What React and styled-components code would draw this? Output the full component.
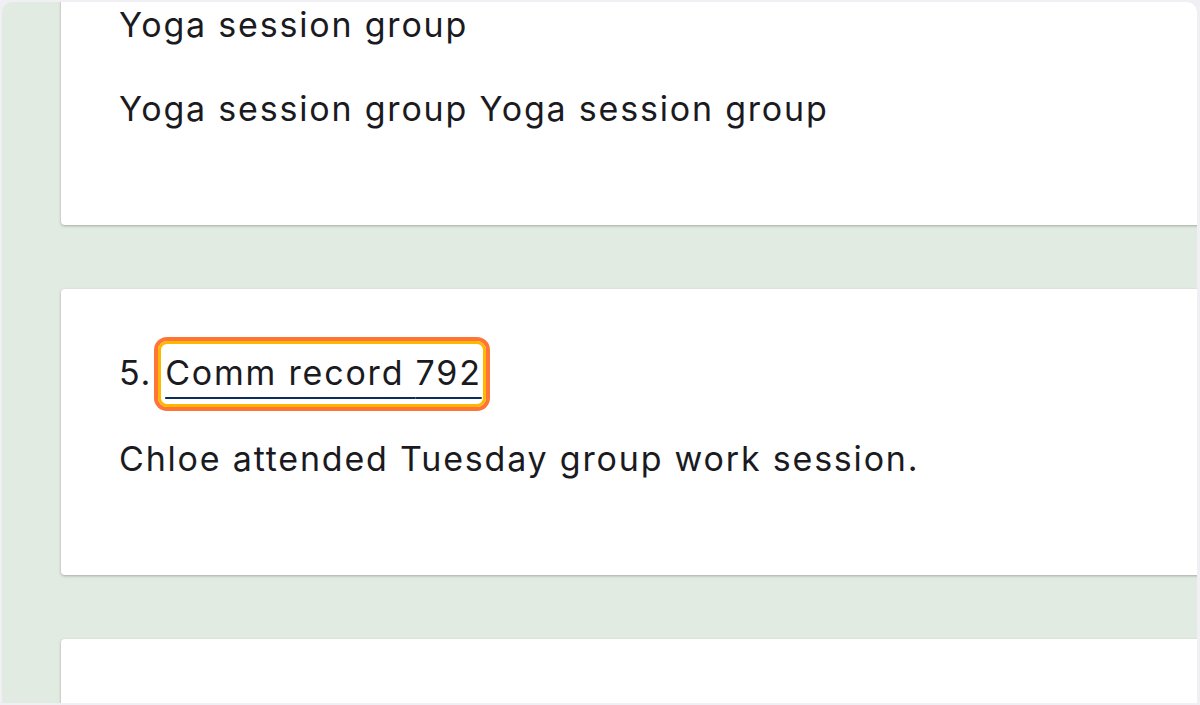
import styled, { createGlobalStyle } from 'styled-components'

const GlobalStyle = createGlobalStyle`
  html, body {
    margin: 0;
    padding: 0;
    background: #efeff4;
  }
  body {
    font-family: Inter, 'Noto Sans', sans-serif;
    color: #1b1b1f;
  }
`

const Frame = styled.div`
  width: 1200px;
  height: 705px;
  padding: 2px 3px 2px 2px;
  box-sizing: border-box;
  background: #efeff4;
`

const Viewport = styled.main`
  height: 100%;
  overflow: hidden;
  background: #e2ebe1;
  border-radius: 10px 10px 0 0;
`

const Feed = styled.div`
  display: flex;
  flex-direction: column;
  gap: 64px;
  margin-top: ${({ $scroll }) => -$scroll}px;
  padding-left: 59px;
  width: 1400px;
`

const Card = styled.article`
  background: #fff;
  border-radius: 4px;
  box-shadow: 0 1px 3px rgba(0, 0, 0, 0.28);
  padding: 60px 58px 92px;
  display: flex;
  flex-direction: column;
  gap: 38px;
`

const Heading = styled.h3`
  margin: 0;
  font-size: 34px;
  font-weight: 400;
  letter-spacing: 1.8px;
  line-height: 48px;
  display: flex;
  gap: 13px;
`

const RecordLink = styled.a`
  position: relative;
  color: #1b1b1f;
  text-decoration: underline;
  text-decoration-color: #0b2d5b;
  text-decoration-thickness: 2px;
  text-decoration-skip-ink: none;
  text-underline-offset: 12px;

  &::before {
    content: '';
    position: absolute;
    inset: -8px -4px -10px -7px;
    border: 3px solid #ffb700;
    border-radius: 9px;
    box-shadow: 0 0 0 4px #ff7538;
  }
`

const Body = styled.div`
  display: flex;
  flex-direction: column;
  gap: 36px;
`

const Text = styled.p`
  margin: 0;
  font-size: 34px;
  letter-spacing: 1.8px;
  line-height: 48px;
`

const records = [
  {
    id: 791,
    index: 4,
    notes: ['Yoga session group', 'Yoga session group Yoga session group'],
  },
  {
    id: 792,
    index: 5,
    notes: ['Chloe attended Tuesday group work session.'],
    focused: true,
  },
  {
    id: 793,
    index: 6,
    notes: ['Weekly check-in call completed.'],
  },
]

const RecordCard = ({ record }) => (
  <Card>
    <Heading>
      <span>{record.index}.</span>
      {record.focused ? (
        <RecordLink href='#'>Comm record {record.id}</RecordLink>
      ) : (
        <span>Comm record {record.id}</span>
      )}
    </Heading>
    <Body>
      {record.notes.map((note, i) => (
        <Text key={i}>{note}</Text>
      ))}
    </Body>
  </Card>
)

const App = () => (
  <>
    <GlobalStyle />
    <Frame>
      <Viewport>
        <Feed $scroll={147}>
          {records.map(r => (
            <RecordCard key={r.id} record={r} />
          ))}
        </Feed>
      </Viewport>
    </Frame>
  </>
)

export default App
